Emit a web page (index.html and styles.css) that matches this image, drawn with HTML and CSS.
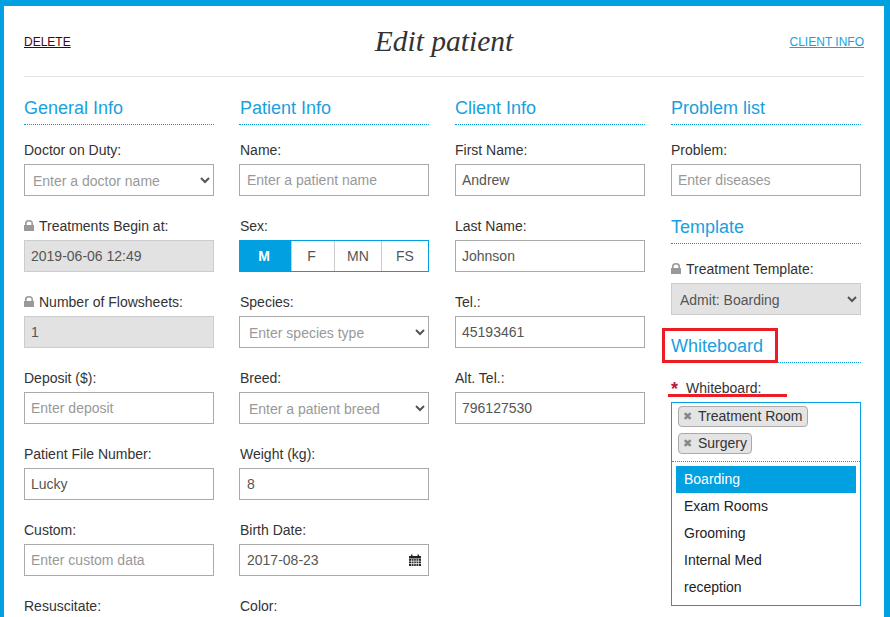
FILE: index.html
```html
<!DOCTYPE html>
<html lang="en">
<head>
  <meta charset="UTF-8">
  <title>Edit patient</title>
  <link rel="stylesheet" href="styles.css">
</head>
<body>
  <svg class="sprite" width="0" height="0">
    <symbol id="lock" viewBox="0 0 10 11">
      <path d="M1 5V3.4a4 3.4 0 0 1 8 0V5h1v6H0V5zM2.600 5h4.800V3.400a2.400 2 0 0 0-4.800 0z"/>
    </symbol>
  </svg>

  <div class="page">
    <header class="top">
      <a class="link delete" href="#">DELETE</a>
      <h1>Edit patient</h1>
      <a class="link info" href="#">CLIENT INFO</a>
    </header>

    <div class="columns">
      <section>
        <h2>General Info</h2>
        <div class="field">
          <label>Doctor on Duty:</label>
          <select class="empty"><option>Enter a doctor name</option></select>
        </div>
        <div class="field">
          <label><svg class="lock"><use href="#lock"/></svg>Treatments Begin at:</label>
          <input type="text" value="2019-06-06 12:49" disabled>
        </div>
        <div class="field">
          <label><svg class="lock"><use href="#lock"/></svg>Number of Flowsheets:</label>
          <input type="text" value="1" disabled>
        </div>
        <div class="field">
          <label>Deposit ($):</label>
          <input type="text" placeholder="Enter deposit">
        </div>
        <div class="field">
          <label>Patient File Number:</label>
          <input type="text" value="Lucky">
        </div>
        <div class="field">
          <label>Custom:</label>
          <input type="text" placeholder="Enter custom data">
        </div>
        <div class="field">
          <label>Resuscitate:</label>
        </div>
      </section>

      <section class="patient">
        <h2>Patient Info</h2>
        <div class="field">
          <label>Name:</label>
          <input type="text" placeholder="Enter a patient name">
        </div>
        <div class="field">
          <label>Sex:</label>
          <div class="sex">
            <span class="active">M</span>
            <span class="nudge">F</span>
            <span>MN</span>
            <span>FS</span>
          </div>
        </div>
        <div class="field">
          <label>Species:</label>
          <select class="empty"><option>Enter species type</option></select>
        </div>
        <div class="field">
          <label>Breed:</label>
          <select class="empty"><option>Enter a patient breed</option></select>
        </div>
        <div class="field">
          <label>Weight (kg):</label>
          <input type="text" value="8">
        </div>
        <div class="field">
          <label>Birth Date:</label>
          <div class="date">
            <span>2017-08-23</span>
            <svg width="12" height="12" viewBox="0 0 12 12">
              <path fill="#222" d="M0 2h2V.5h1.500V2h5V.5H10V2h2v2.500H0zM0 5h12v7H0z"/>
              <path stroke="#fff" stroke-width=".7" d="M0 7.200h12M0 9.500h12M2.600 5v7M4.800 5v7M7.200 5v7M9.400 5v7"/>
            </svg>
          </div>
        </div>
        <div class="field">
          <label>Color:</label>
        </div>
      </section>

      <section>
        <h2>Client Info</h2>
        <div class="field">
          <label>First Name:</label>
          <input type="text" value="Andrew">
        </div>
        <div class="field">
          <label>Last Name:</label>
          <input type="text" value="Johnson">
        </div>
        <div class="field">
          <label>Tel.:</label>
          <input type="text" value="45193461">
        </div>
        <div class="field">
          <label>Alt. Tel.:</label>
          <input type="text" value="796127530">
        </div>
      </section>

      <section>
        <h2>Problem list</h2>
        <div class="field">
          <label>Problem:</label>
          <input type="text" placeholder="Enter diseases">
        </div>
        <h2>Template</h2>
        <div class="field">
          <label><svg class="lock"><use href="#lock"/></svg>Treatment Template:</label>
          <select disabled><option>Admit: Boarding</option></select>
        </div>
        <h2 class="marked">Whiteboard<i class="red-box"></i></h2>
        <div class="field">
          <label class="required"><b>*</b>Whiteboard:<i class="red-line"></i></label>
          <div class="multi">
            <div class="chips">
              <span class="chip"><em>&#10006;</em>Treatment Room</span>
              <span class="chip"><em>&#10006;</em>Surgery</span>
            </div>
            <ul class="options">
              <li class="active">Boarding</li>
              <li>Exam Rooms</li>
              <li>Grooming</li>
              <li>Internal Med</li>
              <li>reception</li>
            </ul>
          </div>
        </div>
      </section>
    </div>
  </div>
</body>
</html>
```

FILE: styles.css
```css
html, body {
  margin: 0;
  height: 100%;
  overflow: hidden;
}
body {
  font-family: "Liberation Sans", Arial, sans-serif;
  font-size: 14px;
  color: #333;
  background-color: #fff;
}
.sprite {
  display: block;
}
.page {
  box-sizing: border-box;
  height: 100%;
  overflow: hidden;
  border-style: solid;
  border-color: #00a0e1;
  border-width: 6px 6px 0 4px;
  padding: 0 20px;
}

/* header */
.top {
  display: flex;
  align-items: center;
  justify-content: space-between;
  height: 70px;
  border-bottom: 1px solid #e5e5e5;
}
.top h1 {
  margin: 0;
  font-family: "Liberation Serif", Georgia, serif;
  font-size: 29.5px;
  font-style: italic;
  font-weight: normal;
  color: #333;
}
.link {
  flex: 1;
  padding-top: 2px;
  font-size: 12px;
}
.delete {
  color: #4d0012;
}
.info {
  color: #1a9fe0;
  text-align: right;
}

/* columns */
.columns {
  display: grid;
  grid-template-columns: 189px 190px 190px 190px;
  column-gap: 26px;
}
section {
  width: 190px;
  padding-top: 21px;
}
h2 {
  position: relative;
  height: 20px;
  margin: -1px 0 17px;
  padding-bottom: 6px;
  border-bottom: 1px dotted #00a0e1;
  font-size: 18px;
  font-weight: normal;
  line-height: 20px;
  color: #1a9fe0;
}
section > h2:first-child {
  margin-top: 0;
}
.field {
  margin-bottom: 22px;
}
label {
  position: relative;
  display: block;
  height: 16px;
  margin-bottom: 6px;
  line-height: 16px;
}
.lock {
  width: 10px;
  height: 11px;
  margin-right: 5px;
  fill: #999;
}

/* controls */
input, select, .date {
  box-sizing: border-box;
  display: block;
  width: 100%;
  height: 32px;
  border: 1px solid #aaa;
  border-radius: 0;
  background-color: #fff;
  font-family: inherit;
  font-size: 14px;
  color: #555;
  outline: none;
}
input {
  padding: 0 6px;
}
select {
  padding: 2px 4px 0;
}
input::placeholder {
  color: #999;
  opacity: 1;
}
select.empty {
  -webkit-text-fill-color: #999;
}
input:disabled, select:disabled {
  border-color: #ccc;
  background-color: #e2e2e2;
  opacity: 1;
}
.date {
  display: flex;
  align-items: center;
  justify-content: space-between;
  padding: 0 7px 0 6px;
}
.patient h2, .patient label {
  text-indent: 1px;
}
.patient input, .patient .date {
  padding-left: 7px;
}
.patient select {
  padding-left: 5px;
}
.sex {
  display: grid;
  grid-template-columns: 51px 43px 47px 1fr;
  box-sizing: border-box;
  height: 32px;
  border: 1px solid #00a0e1;
}
.sex span {
  display: flex;
  align-items: center;
  justify-content: center;
  border-left: 1px solid #ccc;
  color: #555;
}
.sex span:first-child {
  border-left: none;
}
.sex .active {
  padding-right: 3px;
  background-color: #00a0e1;
  font-weight: bold;
  color: #fff;
}
.sex .nudge {
  padding-right: 3px;
}

/* whiteboard picker */
.multi {
  box-sizing: border-box;
  height: 204px;
  border: 1px solid #00a0e1;
}
.chips {
  display: flex;
  flex-wrap: wrap;
  align-content: flex-start;
  gap: 6px;
  height: 59px;
  box-sizing: border-box;
  padding: 3px 6px 0;
  border-bottom: 1px dotted #00a0e1;
}
.chip {
  box-sizing: border-box;
  display: flex;
  align-items: center;
  height: 21px;
  padding: 0 4px;
  border: 1px solid #aaa;
  border-radius: 4px;
  background-color: #e4e4e4;
  line-height: 19px;
}
.chip em {
  width: 15px;
  font-family: "DejaVu Sans", sans-serif;
  font-size: 11px;
  font-style: normal;
  color: #888;
}
.options {
  margin: 0;
  padding: 4px;
  list-style: none;
  color: #222;
}
.options li {
  height: 27px;
  padding-left: 8px;
  line-height: 27px;
}
.options .active {
  background-color: #00a0e1;
  color: #fff;
}

/* red review marks drawn over the form */
.required {
  display: flex;
}
.required b {
  height: 16px;
  margin-right: 8px;
  font-size: 18px;
  line-height: 18px;
  color: #c0143c;
}
.red-box {
  position: absolute;
  left: -9px;
  top: -8px;
  width: 110px;
  height: 29px;
  border: 3px solid #ed1c24;
}
.red-line {
  position: absolute;
  left: -3px;
  top: 14px;
  width: 119px;
  height: 3px;
  background-color: #ed1c24;
}
```
